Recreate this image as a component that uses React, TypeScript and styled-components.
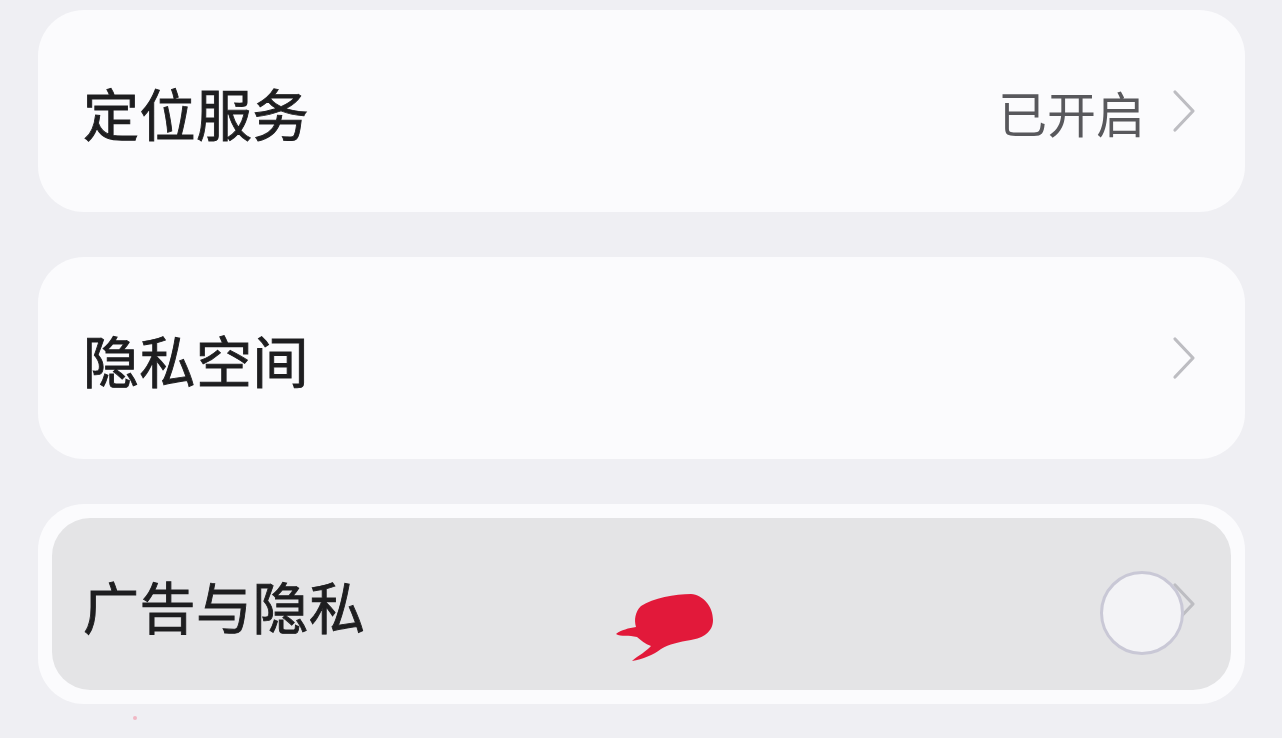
import styled, { createGlobalStyle } from "styled-components";

const GlobalStyle = createGlobalStyle`
  html, body {
    margin: 0;
    padding: 0;
    background: #efeff3;
    font-family: "Noto Sans CJK SC", "Noto Sans", sans-serif;
  }
`;

const Chevron = () => (
  <ChevronSvg viewBox="0 0 26 44" width="26" height="44">
    <path d="M4 3 L22 22 L4 41" fill="none" stroke="#bdbdc2" strokeWidth="3.2" strokeLinecap="round" strokeLinejoin="round" />
  </ChevronSvg>
);

const App = () => {
  return (
    <Page>
      <GlobalStyle />
      <Card>
        <Row>
          <Label>定位服务</Label>
          <Trail>
            <Value>已开启</Value>
            <Chevron />
          </Trail>
        </Row>
      </Card>
      <Card>
        <Row>
          <Label>隐私空间</Label>
          <Trail>
            <Chevron />
          </Trail>
        </Row>
      </Card>
      <Card $pressed>
        <PressedRow>
          <Label>广告与隐私</Label>
          <Trail>
            <Chevron />
          </Trail>
          <Blob viewBox="0 0 100 72" width="100" height="72">
            <path
              d="M26 14 C38 6 60 2 76 2 C88 3 98 14 98 28 C98 40 88 46 76 48 C64 50 54 52 46 57 C38 63 28 67 17 69 C24 63 32 59 36 54 C30 52 26 48 22 45 C14 43 6 45 1 42 C6 38 14 36 21 35 C19 28 20 20 26 14 Z"
              fill="#e2193a"
            />
          </Blob>
          <TouchRing />
        </PressedRow>
      </Card>
      <Dot />
    </Page>
  );
};

export default App;

const Page = styled.div`
  width: 1282px;
  height: 738px;
  box-sizing: border-box;
  padding: 10px 37px 0 38px;
  display: flex;
  flex-direction: column;
  gap: 45px;
  position: relative;
  overflow: hidden;
`;

const Card = styled.div<{ $pressed?: boolean }>`
  height: ${(p) => (p.$pressed ? "200px" : "202px")};
  border-radius: 46px;
  background: #fbfbfd;
  box-sizing: border-box;
  padding: ${(p) => (p.$pressed ? "14px" : "0")};
  display: flex;
  flex-direction: column;
`;

const Row = styled.div`
  flex: 1;
  display: flex;
  align-items: center;
  justify-content: space-between;
  padding: 0 48px 0 45px;
`;

const PressedRow = styled(Row)`
  background: #e4e4e6;
  border-radius: 38px;
  padding: 0 34px 0 31px;
  position: relative;
`;

const Label = styled.span`
  font-size: 56px;
  font-weight: 400;
  color: #1e1e20;
  letter-spacing: 0.5px;
  -webkit-text-stroke: 0.9px #1e1e20;
`;

const Trail = styled.div`
  display: flex;
  align-items: center;
  gap: 26px;
`;

const Value = styled.span`
  font-size: 49px;
  color: #58585c;
`;

const ChevronSvg = styled.svg`
  display: block;
`;

const Blob = styled.svg`
  position: absolute;
  left: 563px;
  top: 74px;
`;

const TouchRing = styled.div`
  position: absolute;
  left: 1048px;
  top: 53px;
  width: 78px;
  height: 78px;
  border-radius: 50%;
  border: 3px solid #c9c8d6;
  background: #f3f3f6;
`;

const Dot = styled.div`
  position: absolute;
  left: 133px;
  top: 716px;
  width: 4px;
  height: 4px;
  border-radius: 50%;
  background: #f0b8c4;
`;
